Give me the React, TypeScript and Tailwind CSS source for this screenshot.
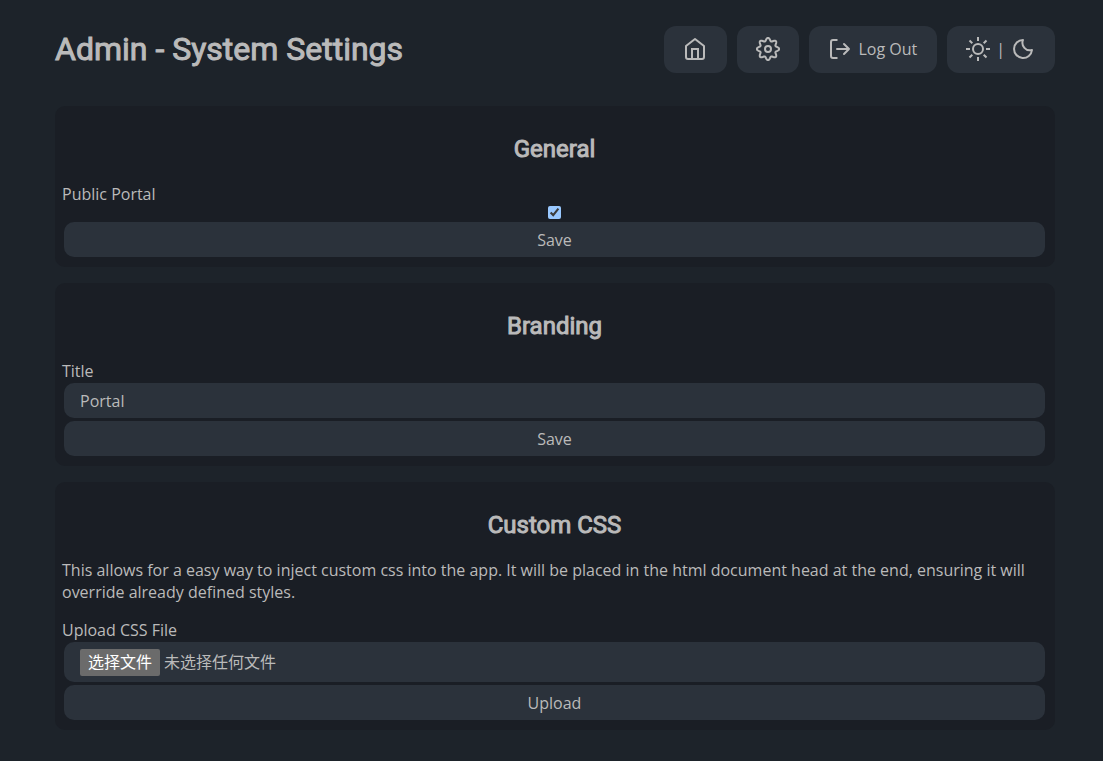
import { useState } from "react";
import type { ReactNode } from "react";

function Icon({ children }: { children: ReactNode }) {
  return (
    <svg
      className="size-6 shrink-0"
      viewBox="0 0 24 24"
      fill="none"
      stroke="currentColor"
      strokeWidth="2"
      strokeLinecap="round"
      strokeLinejoin="round"
      aria-hidden="true"
    >
      {children}
    </svg>
  );
}

const HomeIcon = () => (
  <Icon>
    <path d="M3 9l9-7 9 7v11a2 2 0 0 1-2 2H5a2 2 0 0 1-2-2z" />
    <path d="M9 22V12h6v10" strokeLinejoin="miter" />
  </Icon>
);

// Eight soft lobes: the radius swings around its mean once per tooth.
const gearOutline =
  "M" +
  Array.from({ length: 128 }, (_, i) => {
    const angle = (i / 128) * Math.PI * 2;
    const radius = 9.6 + 1.55 * Math.cos(8 * angle);
    return `${(12 + radius * Math.cos(angle)).toFixed(2)} ${(12 + radius * Math.sin(angle)).toFixed(2)}`;
  }).join("L") +
  "Z";

const GearIcon = () => (
  <Icon>
    <circle cx="12" cy="12" r="3" />
    <path d={gearOutline} />
  </Icon>
);

const LogOutIcon = () => (
  <Icon>
    <path d="M9.500 3H5a2 2 0 0 0-2 2v14a2 2 0 0 0 2 2h4.500" strokeLinecap="butt" />
    <path d="M9 12h12M16 7l5 5-5 5" />
  </Icon>
);

const SunIcon = () => (
  <Icon>
    <circle cx="12" cy="12" r="5" />
    <path
      strokeLinecap="butt"
      d="M12 0v4M12 20v4M0 12h4M20 12h4M3.500 3.500l2.800 2.800M17.700 17.700l2.800 2.800M3.500 20.500l2.800-2.800M17.700 6.300l2.800-2.800"
    />
  </Icon>
);

const MoonIcon = () => (
  <Icon>
    <path d="M12 3a7.500 7.500 0 0 0 9 10 9 9 0 1 1-9-10z" />
  </Icon>
);

const headerButton =
  "flex h-[47px] items-center justify-center rounded-xl bg-[#2b323b] pb-0.5 pl-[19px] hover:bg-[#343c46]";
const field = "w-full rounded-[10px] bg-[#2b323b] px-4";
const button = "h-[35px] w-full rounded-[10px] bg-[#2b323b] hover:bg-[#343c46]";
const heading = "font-[Roboto,sans-serif] font-normal [-webkit-text-stroke:1px_currentColor]";

function Card({ title, children }: { title: string; children: ReactNode }) {
  return (
    <section className="rounded-[10px] bg-[#1a1e25] pt-[29px] pr-2 pb-[9px] pl-[7px]">
      <h2 className={`${heading} mb-5 text-center text-2xl leading-7`}>{title}</h2>
      {children}
    </section>
  );
}

export default function App() {
  const [isPublic, setIsPublic] = useState(true);
  const [title, setTitle] = useState("Portal");
  const [fileName, setFileName] = useState("未选择任何文件");

  return (
    <div className="min-h-screen bg-[#1d232a] pt-[26px] pr-12 pb-8 pl-[55px] font-['Open_Sans','Noto_Sans_CJK_SC',sans-serif] text-base leading-[22px] text-[#bababa]">
      <header className="flex items-center justify-between">
        <h1 className={`${heading} pb-0.5 text-[32px] leading-10`}>Admin - System Settings</h1>
        <nav className="flex gap-2.5">
          <a href="#home" aria-label="Home" className={`${headerButton} pr-5`}>
            <HomeIcon />
          </a>
          <a href="#settings" aria-label="Settings" className={`${headerButton} pr-[19px]`}>
            <GearIcon />
          </a>
          <button type="button" className={`${headerButton} gap-1.5 pr-5`}>
            <LogOutIcon />
            Log Out
          </button>
          <button
            type="button"
            aria-label="Toggle theme"
            className={`${headerButton} gap-1.5 pr-5`}
          >
            <SunIcon />
            <span>|</span>
            <MoonIcon />
          </button>
        </nav>
      </header>

      <main className="mt-[33px] flex flex-col gap-4">
        <Card title="General">
          <form onSubmit={(e) => e.preventDefault()}>
            <label htmlFor="public-portal" className="block">
              Public Portal
            </label>
            <input
              id="public-portal"
              type="checkbox"
              checked={isPublic}
              onChange={(e) => setIsPublic(e.target.checked)}
              className="mx-auto my-px block size-[13px] accent-[#99c8ff]"
            />
            <div className="mt-[3px] px-0.5 pb-px">
              <button type="submit" className={button}>
                Save
              </button>
            </div>
          </form>
        </Card>

        <Card title="Branding">
          <form onSubmit={(e) => e.preventDefault()}>
            <label htmlFor="title" className="block">
              Title
            </label>
            <div className="flex flex-col gap-[3px] px-0.5 py-px">
              <input
                id="title"
                type="text"
                value={title}
                onChange={(e) => setTitle(e.target.value)}
                className={`${field} h-[35px]`}
              />
              <button type="submit" className={button}>
                Save
              </button>
            </div>
          </form>
        </Card>

        <Card title="Custom CSS">
          <p className="mb-4">
            This allows for a easy way to inject custom css into the app. It will be placed in the
            html document head at the end, ensuring it will override already defined styles.
          </p>
          <form onSubmit={(e) => e.preventDefault()}>
            <label htmlFor="css-file" className="block">
              Upload CSS File
            </label>
            <div className="flex flex-col gap-[3px] px-0.5 py-px">
              <label className={`${field} relative flex h-10 items-center gap-1`}>
                <input
                  id="css-file"
                  type="file"
                  accept=".css"
                  className="sr-only"
                  onChange={(e) => setFileName(e.target.files?.[0]?.name ?? "未选择任何文件")}
                />
                <span className="flex h-[27px] items-center rounded-xs bg-[#6b6b6b] px-2 text-white">
                  选择文件
                </span>
                <span>{fileName}</span>
              </label>
              <button type="submit" className={button}>
                Upload
              </button>
            </div>
          </form>
        </Card>
      </main>
    </div>
  );
}
